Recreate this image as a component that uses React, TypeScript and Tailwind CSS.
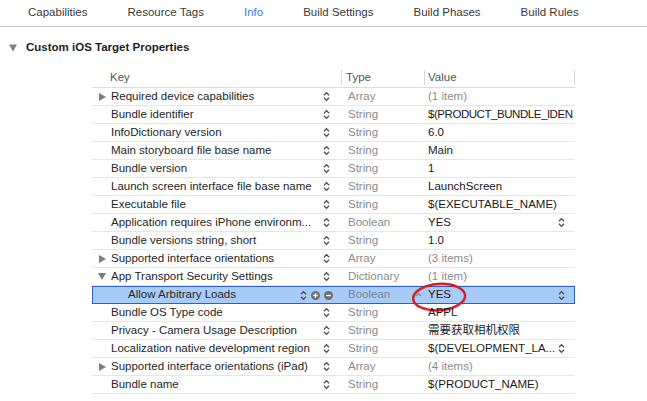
import React from "react";

type Row = {
  k: string;
  t: string;
  v: string;
  tri?: "right" | "down";
  dim?: boolean;
  child?: boolean;
  selected?: boolean;
  pop?: boolean;
  tight?: boolean;
};

const rows: Row[] = [
  { k: "Required device capabilities", t: "Array", v: "(1 item)", tri: "right", dim: true },
  { k: "Bundle identifier", t: "String", v: "$(PRODUCT_BUNDLE_IDEN", tight: true },
  { k: "InfoDictionary version", t: "String", v: "6.0" },
  { k: "Main storyboard file base name", t: "String", v: "Main" },
  { k: "Bundle version", t: "String", v: "1" },
  { k: "Launch screen interface file base name", t: "String", v: "LaunchScreen" },
  { k: "Executable file", t: "String", v: "$(EXECUTABLE_NAME)" },
  { k: "Application requires iPhone environm...", t: "Boolean", v: "YES", pop: true },
  { k: "Bundle versions string, short", t: "String", v: "1.0" },
  { k: "Supported interface orientations", t: "Array", v: "(3 items)", tri: "right", dim: true },
  { k: "App Transport Security Settings", t: "Dictionary", v: "(1 item)", tri: "down", dim: true },
  { k: "Allow Arbitrary Loads", t: "Boolean", v: "YES", child: true, selected: true, pop: true },
  { k: "Bundle OS Type code", t: "String", v: "APPL" },
  { k: "Privacy - Camera Usage Description", t: "String", v: "需要获取相机权限" },
  { k: "Localization native development region", t: "String", v: "$(DEVELOPMENT_LA...", pop: true },
  { k: "Supported interface orientations (iPad)", t: "Array", v: "(4 items)", tri: "right", dim: true },
  { k: "Bundle name", t: "String", v: "$(PRODUCT_NAME)" },
];

const tabs = ["Capabilities", "Resource Tags", "Info", "Build Settings", "Build Phases", "Build Rules"];

const Stepper = () => (
  <svg width="7" height="11" viewBox="0 0 7 11" className="shrink-0">
    <path d="M1 4.2 L3.5 1.6 L6 4.2" fill="none" stroke="#4a4a4a" strokeWidth="1.3" />
    <path d="M1 6.8 L3.5 9.4 L6 6.8" fill="none" stroke="#4a4a4a" strokeWidth="1.3" />
  </svg>
);

const Triangle = ({ dir }: { dir: "right" | "down" }) =>
  dir === "right" ? (
    <svg width="7" height="8" viewBox="0 0 7 8">
      <path d="M0 0 L7 4 L0 8 Z" fill="#7d7d7d" />
    </svg>
  ) : (
    <svg width="8" height="7" viewBox="0 0 8 7">
      <path d="M0 0 L8 0 L4 7 Z" fill="#7d7d7d" />
    </svg>
  );

const RoundBtn = ({ minus }: { minus?: boolean }) => (
  <svg width="9" height="9" viewBox="0 0 9 9">
    <circle cx="4.5" cy="4.5" r="4.5" fill="#6e6e6e" />
    <path d="M2.2 4.5 H6.8" stroke="#fff" strokeWidth="1.4" />
    {!minus && <path d="M4.5 2.2 V6.8" stroke="#fff" strokeWidth="1.4" />}
  </svg>
);

// red annotation drawn over the YES value
const Ellipse = () => (
  <svg
    width="60"
    height="34"
    viewBox="0 0 60 34"
    className="absolute left-[-15px] top-[-6px] pointer-events-none"
  >
    <ellipse cx="30.5" cy="17.8" rx="26" ry="13.2" fill="none" stroke="rgba(0,0,0,0.22)" strokeWidth="2.4" transform="rotate(-4 30 17)" />
    <ellipse cx="30" cy="17" rx="26" ry="13.2" fill="none" stroke="#e3171c" strokeWidth="2.2" transform="rotate(-4 30 17)" />
  </svg>
);

export default function App() {
  return (
    <div
      className="w-[647px] h-[401px] bg-white overflow-hidden text-[11.5px] text-[#262626]"
      style={{ fontFamily: '"Liberation Sans", Arial, "Noto Sans CJK SC", sans-serif' }}
    >
      <div className="h-[27px] border-b border-[#c8c8c8] flex items-center gap-[40px] pl-[28px] pb-[1px] text-[11.5px] text-[#3a3a3a]">
        {tabs.map((t) => (
          <span key={t} className={t === "Info" ? "text-[#3d80de]" : ""}>
            {t}
          </span>
        ))}
      </div>

      <div className="h-[41px] flex items-center pl-[9px] gap-[9px]">
        <svg width="8" height="8" viewBox="0 0 8 8">
          <path d="M0 0.5 L8 0.5 L4 7.5 Z" fill="#808080" />
        </svg>
        <span className="font-bold text-[#1f1f1f]">Custom iOS Target Properties</span>
      </div>

      <div className="ml-[92px] w-[483px]">
        <div className="h-[20px] flex items-stretch border-b border-[#dcdcdc] text-[#555]">
          <div className="w-[249px] pl-[18px] flex items-center">Key</div>
          <div className="w-[83px] border-l border-[#d8d8d8] my-[2px] pl-[4px] flex items-center">Type</div>
          <div className="w-[151px] border-l border-r border-[#d8d8d8] my-[2px] pl-[3px] flex items-center">Value</div>
        </div>

        {rows.map((r) => (
          <div
            key={r.k}
            className={
              r.selected
                ? "relative h-[18px] flex items-center bg-[#a9cbf8] shadow-[inset_0_0_0_1px_#2c5fcf]"
                : "h-[18px] flex items-center border-b border-[#e6e6e6]"
            }
          >
            <div className="w-[249px] flex items-center h-full">
              <div className={r.child ? "w-[36px] shrink-0" : "w-[19px] shrink-0 flex justify-center pl-[1px]"}>
                {r.tri && <Triangle dir={r.tri} />}
              </div>
              <div className="flex-1 whitespace-nowrap overflow-hidden">{r.k}</div>
              {r.selected ? (
                <div className="flex items-center gap-[4px] pr-[8px] pl-[4px]">
                  <Stepper />
                  <RoundBtn />
                  <RoundBtn minus />
                </div>
              ) : (
                <div className="pr-[11px] pl-[3px] flex items-center">
                  <Stepper />
                </div>
              )}
            </div>
            <div className={`w-[83px] pl-[7px] whitespace-nowrap ${r.selected ? "text-[#7a8699]" : "text-[#8c8c8c]"}`}>
              {r.t}
            </div>
            <div className={`relative w-[151px] pl-[4px] flex items-center h-full ${r.pop ? "pr-[10px]" : "pr-0"}`}>
              {r.selected && (
                <>
                  <Ellipse />
                  <svg width="7" height="5" viewBox="0 0 7 5" className="absolute left-[-9px] top-[6px]">
                    <path d="M1 4 L3.5 1.5 L6 4" fill="none" stroke="#7a8699" strokeWidth="1.2" />
                  </svg>
                </>
              )}
              <div
                className={`flex-1 whitespace-nowrap overflow-hidden ${r.tight ? "tracking-[-0.45px]" : ""} ${
                  r.dim ? "text-[#8c8c8c]" : "text-[#1a1a1a]"
                }`}
              >
                {r.v}
              </div>
              {r.pop && <Stepper />}
            </div>
          </div>
        ))}
      </div>
    </div>
  );
}
